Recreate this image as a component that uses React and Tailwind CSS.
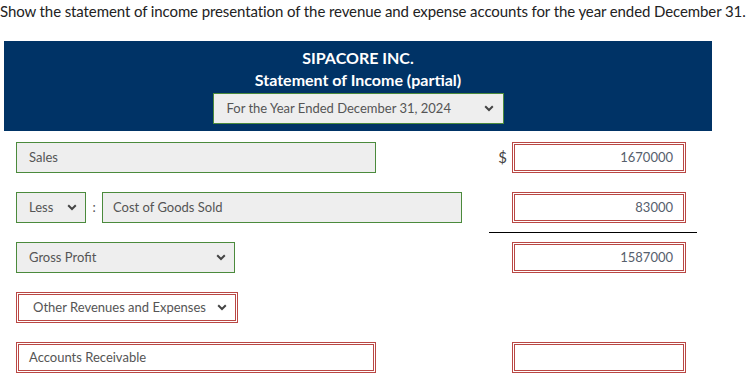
import React from "react";

const Chevron = () => (
  <svg width="10" height="7" viewBox="0 0 10 7" className="shrink-0">
    <path d="M1.2 1.3 L5 5 L8.8 1.3" fill="none" stroke="#444" strokeWidth="2" />
  </svg>
);

const greenBox = "h-[31px] border border-[#4b8a3c] bg-[#eeeeee] flex items-center text-[13px] text-[#555]";
const redBox = "h-[31px] border-[3px] border-double border-[#b94744] bg-white flex items-center text-[13px] text-[#555]";

function Value({ v }) {
  return (
    <div className={redBox + " w-[174px] justify-end pr-[10px] text-[#56606d]"}>{v}</div>
  );
}

export default function App() {
  return (
    <div className="w-[752px] h-[391px] bg-white overflow-hidden" style={{ fontFamily: "Lato, 'Open Sans', sans-serif" }}>
      <div className="text-[15px] leading-[20px] pt-[1px] text-[#222] whitespace-nowrap tracking-[-0.1px]">
        Show the statement of income presentation of the revenue and expense accounts for the year ended December 31.
      </div>
      <div className="ml-[4px] mt-[20px] w-[708px] h-[90px] bg-[#003366] flex flex-col items-center pt-[7px]">
        <div className="text-white font-bold text-[16px] leading-[20px]">SIPACORE INC.</div>
        <div className="text-white font-bold text-[16px] leading-[20px] mt-[2px]">Statement of Income (partial)</div>
        <div className={greenBox + " w-[291px] mt-[3px] pl-[13px] pr-[9px] justify-between"}>
          <span>For the Year Ended December 31, 2024</span>
          <Chevron />
        </div>
      </div>

      <div className="pl-[16px] pt-[11px] flex flex-col">
        {/* Row 1 */}
        <div className="flex items-center">
          <div className={greenBox + " w-[360px] pl-[12px]"}>Sales</div>
          <div className="w-[136px] flex justify-end pr-[5px] text-[15px] text-[#444]">$</div>
          <Value v="1670000" />
        </div>
        {/* Row 2 */}
        <div className="flex items-center mt-[19px]">
          <div className={greenBox + " w-[70px] pl-[12px] pr-[8px] justify-between"}>
            <span>Less</span>
            <Chevron />
          </div>
          <div className="w-[16px] text-center text-[13px] text-[#555]">:</div>
          <div className={greenBox + " w-[360px] pl-[10px]"}>Cost of Goods Sold</div>
          <div className="w-[50px]" />
          <Value v="83000" />
        </div>
        <div className="h-[19px] flex items-center">
          <div className="ml-[473px] w-[208px] h-px bg-black" />
        </div>
        {/* Row 3 */}
        <div className="flex items-center">
          <div className={greenBox + " w-[219px] pl-[12px] pr-[8px] justify-between"}>
            <span>Gross Profit</span>
            <Chevron />
          </div>
          <div className="w-[277px]" />
          <Value v="1587000" />
        </div>
        {/* Row 4 */}
        <div className="flex items-center mt-[19px]">
          <div className={redBox + " w-[222px] pl-[14px] pr-[8px] justify-between"}>
            <span>Other Revenues and Expenses</span>
            <Chevron />
          </div>
        </div>
        {/* Row 5 */}
        <div className="flex items-center mt-[19px]">
          <div className={redBox + " w-[360px] pl-[10px]"}>Accounts Receivable</div>
          <div className="w-[136px]" />
          <Value v="" />
        </div>
      </div>
    </div>
  );
}
